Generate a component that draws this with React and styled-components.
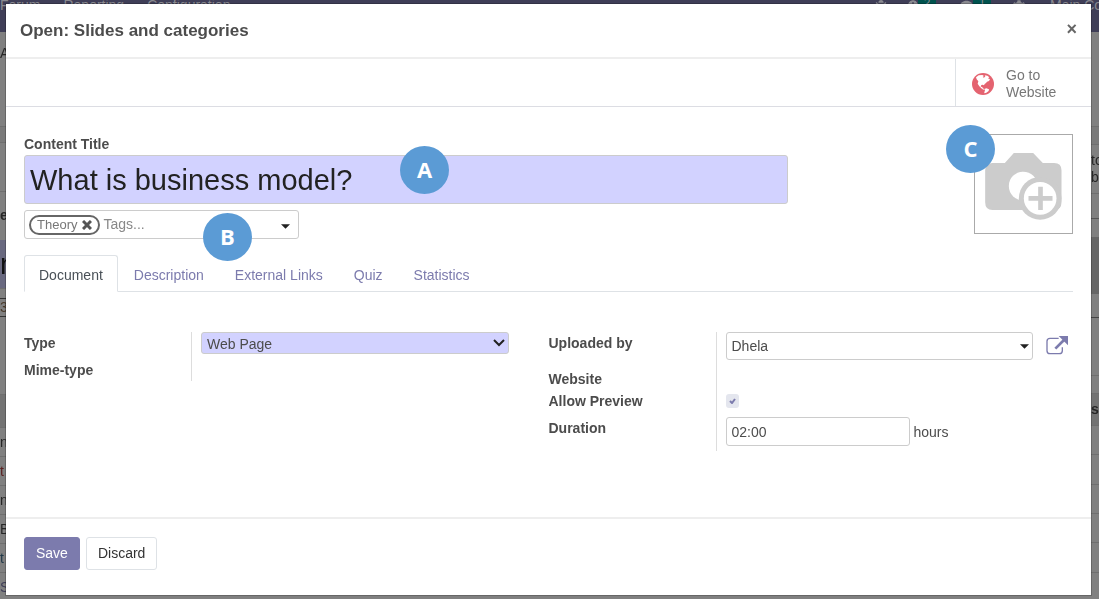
import React, { useState } from 'react'
import styled, { createGlobalStyle } from 'styled-components'
import { FaBug, FaClock, FaCog, FaComment } from 'react-icons/fa'

const GlobalStyle = createGlobalStyle`
* {
  box-sizing: border-box;
}
body {
  margin: 0;
  background: #808080;
  color: #4c4c4c;
  font: 14px/21px "Liberation Sans", Arial, sans-serif;
}
button, input, select {
  font: inherit;
  color: inherit;
}
`;

/* page behind the dialog */
const Backdrop = styled.div`
position: fixed;
inset: 0;
overflow: hidden;
`;
const TopBar = styled.div`
display: flex;
gap: 23px;
height: 32px;
background: #3f3e57;
color: #8a8a90;
line-height: 10px;
white-space: nowrap;
overflow: hidden;
`;
const Systray = styled.div`
display: flex;
flex: 0 0 224px;
margin-left: auto;
overflow: hidden;
`;
const TrayItem = styled.span`
display: flex;
flex: none;
width: ${p => p.$width}px;
height: 10px;
`;
const Count = styled.span`
width: 18px;
text-align: center;
background: #00524e;
font-size: 12px;
line-height: 6px;
`;
const Edges = styled.div`
display: flex;
justify-content: space-between;
`;
const Edge = styled.div`
width: 8px;
overflow: hidden;
`;
const EdgeCell = styled.div`
display: flex;
align-items: center;
height: ${p => p.$height}px;
background: ${p => p.$fill || 'transparent'};
border-bottom: 1px solid ${p => p.$line || '#6f6f6f'};
color: ${p => p.$color || '#262626'};
font-size: ${p => p.$size || 14}px;
font-weight: ${p => p.$bold ? 'bold' : 'normal'};
line-height: 17px;
white-space: pre;
`;

/* dialog */
const Modal = styled.section`
position: relative;
margin: 4px 8px 4px 6px;
background: #fff;
box-shadow: 0 0 0 1px rgba(0, 0, 0, 0.2);
`;
const Header = styled.header`
display: flex;
justify-content: space-between;
align-items: center;
height: 55px;
padding: 1px 14px 0;
border-bottom: 2px solid #eee;
`;
const Heading = styled.h1`
margin: 0;
font-size: 17px;
line-height: 24px;
`;
const Close = styled.button`
padding: 0;
border: 0;
background: none;
color: #666;
font-size: 18px;
font-weight: bold;
line-height: 20px;
margin-bottom: 5px;
`;
const StatBar = styled.div`
display: flex;
justify-content: flex-end;
border-bottom: 1px solid #dcdde3;
`;
const StatButton = styled.button`
display: flex;
align-items: center;
gap: 12px;
width: 136px;
height: 47px;
padding: 3px 16px 0;
border: 0;
border-left: 1px solid #dee2e6;
background: none;
color: #777;
line-height: 17px;
text-align: left;
`;
const StatText = styled.span`
width: 56px;
`;
const Sheet = styled.form`
padding: 26px 18px 66px;
`;
const TitleRow = styled.div`
display: flex;
justify-content: space-between;
align-items: flex-start;
`;
const TitleBox = styled.div`
flex: 0 1 764px;
`;
const Label = styled.label`
display: block;
font-weight: bold;
line-height: 22px;
`;
const Anchor = styled.div`
position: relative;
`;
const TitleInput = styled.input`
display: block;
width: 100%;
height: 49px;
padding: 2px 5px 0;
border: 1px solid #ccc;
border-radius: 3px;
background: #d2d2ff;
color: #222;
font-size: 29px;
`;
const TagsField = styled.div`
position: relative;
display: flex;
align-items: center;
gap: 3px;
width: 275px;
height: 29px;
margin-top: 6px;
padding: 0 4px;
border: 1px solid #ccc;
border-radius: 3px;
`;
const Tag = styled.span`
display: flex;
align-items: center;
gap: 5px;
height: 20px;
padding: 0 6px;
border: 2px solid #666;
border-radius: 10px;
color: #777;
font-size: 13px;
line-height: 16px;
`;
const TagRemove = styled.button`
display: flex;
padding: 0;
border: 0;
background: none;
`;
const TagsInput = styled.input`
flex: 1;
min-width: 0;
padding: 0;
border: 0;
background: none;
outline: 0;
&::placeholder {
  color: #888;
  opacity: 1;
}
`;
const DropButton = styled.button`
display: flex;
padding: 4px 4px 0;
border: 0;
background: none;
color: #222;
`;
const ImageButton = styled.button`
position: relative;
display: flex;
align-items: center;
justify-content: center;
width: 99px;
height: 100px;
margin-top: 1px;
padding: 4px 0 0;
border: 1px solid #aaa;
background: #fff;
`;
const Marker = styled.span`
position: absolute;
left: ${p => p.$left}px;
top: ${p => p.$top}px;
width: 49px;
height: 48px;
border-radius: 50%;
background: #5b9bd5;
color: #fff;
font: bold 22px/46px "Open Sans", "Noto Sans", sans-serif;
text-align: center;
`;
const Tabs = styled.nav`
display: flex;
gap: 1px;
margin-top: 16px;
border-bottom: 1px solid #dee2e6;
`;
const Tab = styled.a`
height: 37px;
margin-bottom: -1px;
padding: 9px 14px 0;
border: 1px solid ${p => p.$active ? '#dee2e6' : 'transparent'};
border-bottom-color: ${p => p.$active ? '#fff' : 'transparent'};
border-radius: 3px 3px 0 0;
color: ${p => p.$active ? '#495057' : '#7c7bad'};
text-decoration: none;
`;
const Groups = styled.div`
display: grid;
grid-template-columns: 1fr 1fr;
align-items: start;
min-height: 119px;
margin-top: 40px;
`;
const Group = styled.div`
display: flex;
flex-direction: column;
`;
const Field = styled.div`
display: grid;
grid-template-columns: 167px 1fr;
`;
const Value = styled.div`
display: flex;
align-items: flex-start;
min-height: 22px;
padding-left: 9px;
padding-right: ${p => p.$full ? 0 : 40}px;
padding-bottom: ${p => p.$space || 0}px;
border-left: 1px solid #ddd;
`;
const SelectBox = styled.div`
position: relative;
flex: 1;
display: flex;
align-items: center;
`;
const Select = styled.select`
width: 100%;
height: ${p => p.$required ? 22 : 28}px;
padding: 1px 5px 0;
border: 1px solid #ccc;
border-radius: 3px;
background: ${p => p.$required ? '#d2d2ff' : '#fff'};
appearance: none;
`;
const SelectMark = styled.span`
position: absolute;
right: 4px;
display: flex;
color: #222;
pointer-events: none;
`;
const LinkButton = styled.button`
display: flex;
width: 40px;
padding: 4px 0 0 13px;
border: 0;
background: none;
color: #7c7bad;
`;
const CheckLine = styled.span`
position: relative;
display: flex;
align-items: center;
justify-content: center;
width: 13px;
height: 14px;
margin-top: 4px;
`;
const Checkbox = styled.input`
width: 13px;
height: 14px;
margin: 0;
border-radius: 3px;
background: #e4e6ee;
appearance: none;
`;
const Tick = styled.svg`
position: absolute;
pointer-events: none;
`;
const Duration = styled.input`
width: 184px;
height: 29px;
margin-right: 4px;
padding: 0 5px;
border: 1px solid #ccc;
border-radius: 3px;
`;
const Unit = styled.span`
line-height: 30px;
height: 29px;
`;
const Footer = styled.footer`
display: flex;
gap: 6px;
padding: 18px 18px 25px;
border-top: 2px solid #eee;
`;
const Button = styled.button`
height: 33px;
padding: 0 11px;
border: 1px solid ${p => p.$primary ? '#7c7bad' : '#dee2e6'};
border-radius: 3px;
background: ${p => p.$primary ? '#7c7bad' : '#fff'};
color: ${p => p.$primary ? '#fff' : '#333'};
`;

function Caret({ width = 9 }) {
  return (
    <svg width={width} height="5" viewBox="0 0 10 5">
      <path d="M0 0H10L5 5Z" fill="currentColor" />
    </svg>
  )
}

function Globe() {
  return (
    <svg width="22" height="22" viewBox="0 0 66 66">
      <circle cx="33" cy="33" r="33" fill="#e46370" />
      <path
        d="M12 13L20 7L31 6L36 9L32 12L36 14L40 10L38 7L46 8L52 13L48 16L54 19L51 24L45 26L42 30L38 33L36 37L32 35L28 36L26 41L31 42L32 46L37 48L34 50L28 46L22 40L17 32L19 25L14 19Z"
        fill="#fff"
      />
      <path d="M37 48L43 46L51 49L50 54L43 59L37 61L37 57L39 53Z" fill="#fff" />
    </svg>
  )
}

function Camera() {
  return (
    <svg width="77" height="67" viewBox="0 0 230 201">
      <path
        d="M59 30L86 0H144L173 30H207Q229 30 229 52V148Q229 171 207 171H22Q0 171 0 148V52Q0 30 22 30Z"
        fill="#ccc"
      />
      <circle cx="114" cy="99" r="43" fill="#fff" />
      <circle cx="165" cy="136" r="64" fill="#ccc" />
      <circle cx="165" cy="136" r="49" fill="#fff" />
      <path d="M130 136H202M166 101V171" stroke="#ccc" strokeWidth="14" />
    </svg>
  )
}

function ExternalLink() {
  return (
    <svg width="22" height="19" viewBox="0 0 66 57" fill="none" stroke="currentColor">
      <path d="M38 7H12Q3 7 3 16V44Q3 53 12 53H40Q49 53 49 44V34" strokeWidth="4" />
      <path d="M28 38L54 12" strokeWidth="8" />
      <path d="M38 0H66V28Z" fill="currentColor" stroke="none" />
    </svg>
  )
}

function Behind() {
  return (
    <Backdrop aria-hidden="true">
      <TopBar>
        <span>Forum</span>
        <span>Reporting</span>
        <span>Configuration</span>
        <Systray>
          <TrayItem $width={33}><FaBug size={12} /></TrayItem>
          <TrayItem $width={52}><FaClock size={10} /><Count>2</Count></TrayItem>
          <TrayItem $width={52}><FaComment size={13} /><Count>1</Count></TrayItem>
          <TrayItem $width={38}><FaCog size={14} /></TrayItem>
          <span>Main Company</span>
        </Systray>
      </TopBar>
      <Edges>
        <Edge>
          <EdgeCell $height={44} $line="transparent">A</EdgeCell>
          <EdgeCell $height={51} />
          <EdgeCell $height={16} $fill="#7a7a7a" />
          <EdgeCell $height={49} />
          <EdgeCell $height={48} $line="transparent" $bold>e</EdgeCell>
          <EdgeCell $height={49} $fill="#696980" $size={29} $color="#111">n</EdgeCell>
          <EdgeCell $height={10} $line="#333" />
          <EdgeCell $height={18} $line="#333" $color="#4a3a2a">3</EdgeCell>
          <EdgeCell $height={78} />
          <EdgeCell $height={33} $fill="#737373" />
          <EdgeCell $height={29}>n</EdgeCell>
          <EdgeCell $height={29} $color="#5a2020">t</EdgeCell>
          <EdgeCell $height={29}>n</EdgeCell>
          <EdgeCell $height={29}>B</EdgeCell>
          <EdgeCell $height={29} $color="#1f3848">t</EdgeCell>
          <EdgeCell $height={29} $color="#3e3d57">S</EdgeCell>
        </Edge>
        <Edge>
          <EdgeCell $height={95} />
          <EdgeCell $height={18} $fill="#7a7a7a" />
          <EdgeCell $height={49}>{'to\nb'}</EdgeCell>
          <EdgeCell $height={25} $line="#555" />
          <EdgeCell $height={18} $line="transparent" />
          <EdgeCell $height={57} $fill="#666" $line="transparent" />
          <EdgeCell $height={24} $line="#444" />
          <EdgeCell $height={58} />
          <EdgeCell $height={18} />
          <EdgeCell $height={32} $fill="#737373" $bold>s</EdgeCell>
          <EdgeCell $height={29} />
          <EdgeCell $height={30} />
          <EdgeCell $height={29} />
          <EdgeCell $height={29} />
          <EdgeCell $height={30} />
        </Edge>
      </Edges>
    </Backdrop>
  )
}

const tabs = ['Document', 'Description', 'External Links', 'Quiz', 'Statistics'];

export default function App() {
  const [tab, setTab] = useState('Document')
  return (
    <>
      <GlobalStyle />
      <Behind />
      <Modal role="dialog" aria-labelledby="heading">
        <Header>
          <Heading id="heading">Open: Slides and categories</Heading>
          <Close type="button" aria-label="Close">×</Close>
        </Header>
        <StatBar>
          <StatButton type="button">
            <Globe />
            <StatText>Go to Website</StatText>
          </StatButton>
        </StatBar>
        <Sheet id="slide" onSubmit={e => e.preventDefault()}>
          <TitleRow>
            <TitleBox>
              <Label htmlFor="title">Content Title</Label>
              <Anchor>
                <TitleInput id="title" type="text" defaultValue="What is business model?" />
                <Marker $left={376} $top={-9}>A</Marker>
              </Anchor>
              <TagsField>
                <Tag>
                  Theory
                  <TagRemove type="button" aria-label="Remove Theory">
                    <svg width="10" height="10" viewBox="0 0 10 10">
                      <path d="M1 1L9 9M9 1L1 9" stroke="#555" strokeWidth="3" />
                    </svg>
                  </TagRemove>
                </Tag>
                <TagsInput type="text" aria-label="Tags" placeholder="Tags..." />
                <DropButton type="button" aria-label="Show tags"><Caret /></DropButton>
                <Marker $left={178} $top={2}>B</Marker>
              </TagsField>
            </TitleBox>
            <ImageButton type="button" aria-label="Add image">
              <Camera />
              <Marker $left={-29} $top={-10}>C</Marker>
            </ImageButton>
          </TitleRow>
          <Tabs>
            {tabs.map(name => (
              <Tab key={name} href="#slide" $active={name === tab} onClick={() => setTab(name)}>
                {name}
              </Tab>
            ))}
          </Tabs>
          <Groups>
            <Group>
              <Field>
                <Label htmlFor="type">Type</Label>
                <Value $space={5}>
                  <SelectBox>
                    <Select id="type" $required defaultValue="Web Page">
                      <option>Web Page</option>
                    </Select>
                    <SelectMark>
                      <svg width="12" height="8" viewBox="0 0 12 8">
                        <path d="M1 1L6 6L11 1" fill="none" stroke="currentColor" strokeWidth="2" />
                      </svg>
                    </SelectMark>
                  </SelectBox>
                </Value>
              </Field>
              <Field>
                <Label as="span">Mime-type</Label>
                <Value />
              </Field>
            </Group>
            <Group>
              <Field>
                <Label htmlFor="user">Uploaded by</Label>
                <Value $full $space={8}>
                  <SelectBox>
                    <Select id="user" defaultValue="Dhela">
                      <option>Dhela</option>
                    </Select>
                    <SelectMark><Caret /></SelectMark>
                  </SelectBox>
                  <LinkButton type="button" aria-label="Open user"><ExternalLink /></LinkButton>
                </Value>
              </Field>
              <Field>
                <Label as="span">Website</Label>
                <Value />
              </Field>
              <Field>
                <Label htmlFor="preview">Allow Preview</Label>
                <Value $space={9}>
                  <CheckLine>
                    <Checkbox id="preview" type="checkbox" defaultChecked />
                    <Tick width="7" height="6" viewBox="0 0 7 6">
                      <path d="M1 3L3 5L6 1" fill="none" stroke="#7c7bad" strokeWidth="2" />
                    </Tick>
                  </CheckLine>
                </Value>
              </Field>
              <Field>
                <Label htmlFor="duration">Duration</Label>
                <Value $space={5}>
                  <Duration id="duration" type="text" defaultValue="02:00" />
                  <Unit>hours</Unit>
                </Value>
              </Field>
            </Group>
          </Groups>
        </Sheet>
        <Footer>
          <Button type="submit" form="slide" $primary>Save</Button>
          <Button type="button">Discard</Button>
        </Footer>
      </Modal>
    </>
  )
}
